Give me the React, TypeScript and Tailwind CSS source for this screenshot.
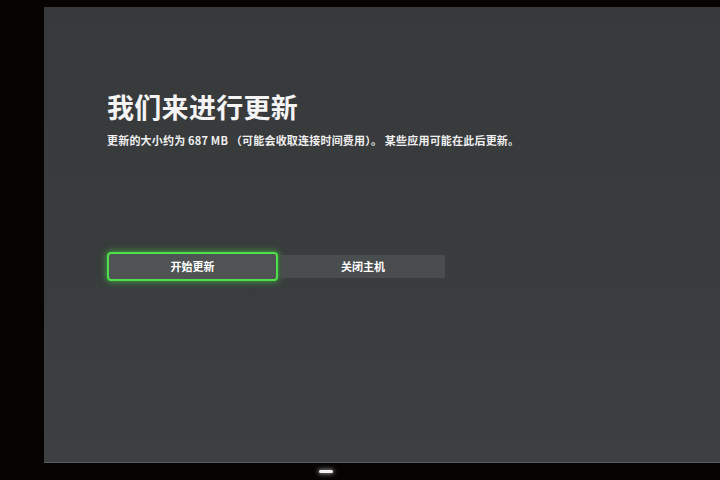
import React from 'react';

const cjk = { fontFamily: '"Noto Sans CJK SC", "Noto Sans", sans-serif' };

export default function App() {
    return (
        <div className="w-[720px] h-[480px] bg-[#050403] flex flex-col overflow-hidden" style={cjk}>
            <div className="flex-1 flex pt-[7px] pl-[44px]">
                {/* console screen */}
                <div className="flex-1 bg-gradient-to-b from-[#37393b] via-[#393c3d] to-[#3c4041] border-b border-[#5a5e5f] flex flex-col pl-[63px]">
                    <h1 className="mt-[83px] text-[27px] leading-[34px] font-bold text-[#f4f4f4] tracking-[0.3px]">
                        我们来进行更新
                    </h1>
                    <p className="mt-[9px] text-[11px] leading-[14px] font-bold text-[#f0f0f0] tracking-[0.2px]">
                        更新的大小约为 687 MB （可能会收取连接时间费用）。 某些应用可能在此后更新。
                    </p>

                    <div className="mt-[105px] flex items-center gap-[3px]">
                        <button className="w-[171px] h-[29px] rounded-[4px] border-[2.5px] border-[#4ee04a] bg-[#505354] shadow-[0_0_6px_1px_rgba(70,230,70,0.55)] text-[11px] font-bold text-white">
                            开始更新
                        </button>
                        <button className="w-[164px] h-[23px] bg-[#4a4d4e] text-[11px] font-bold text-white">
                            关闭主机
                        </button>
                    </div>
                </div>
            </div>
            {/* bezel with power light */}
            <div className="h-[17px] flex pl-[319px]">
                <div className="mt-[7px] w-[14px] h-[3px] rounded-full bg-[#f2f2f2] shadow-[0_0_4px_1px_rgba(255,255,255,0.5)]" />
            </div>
        </div>
    );
}
